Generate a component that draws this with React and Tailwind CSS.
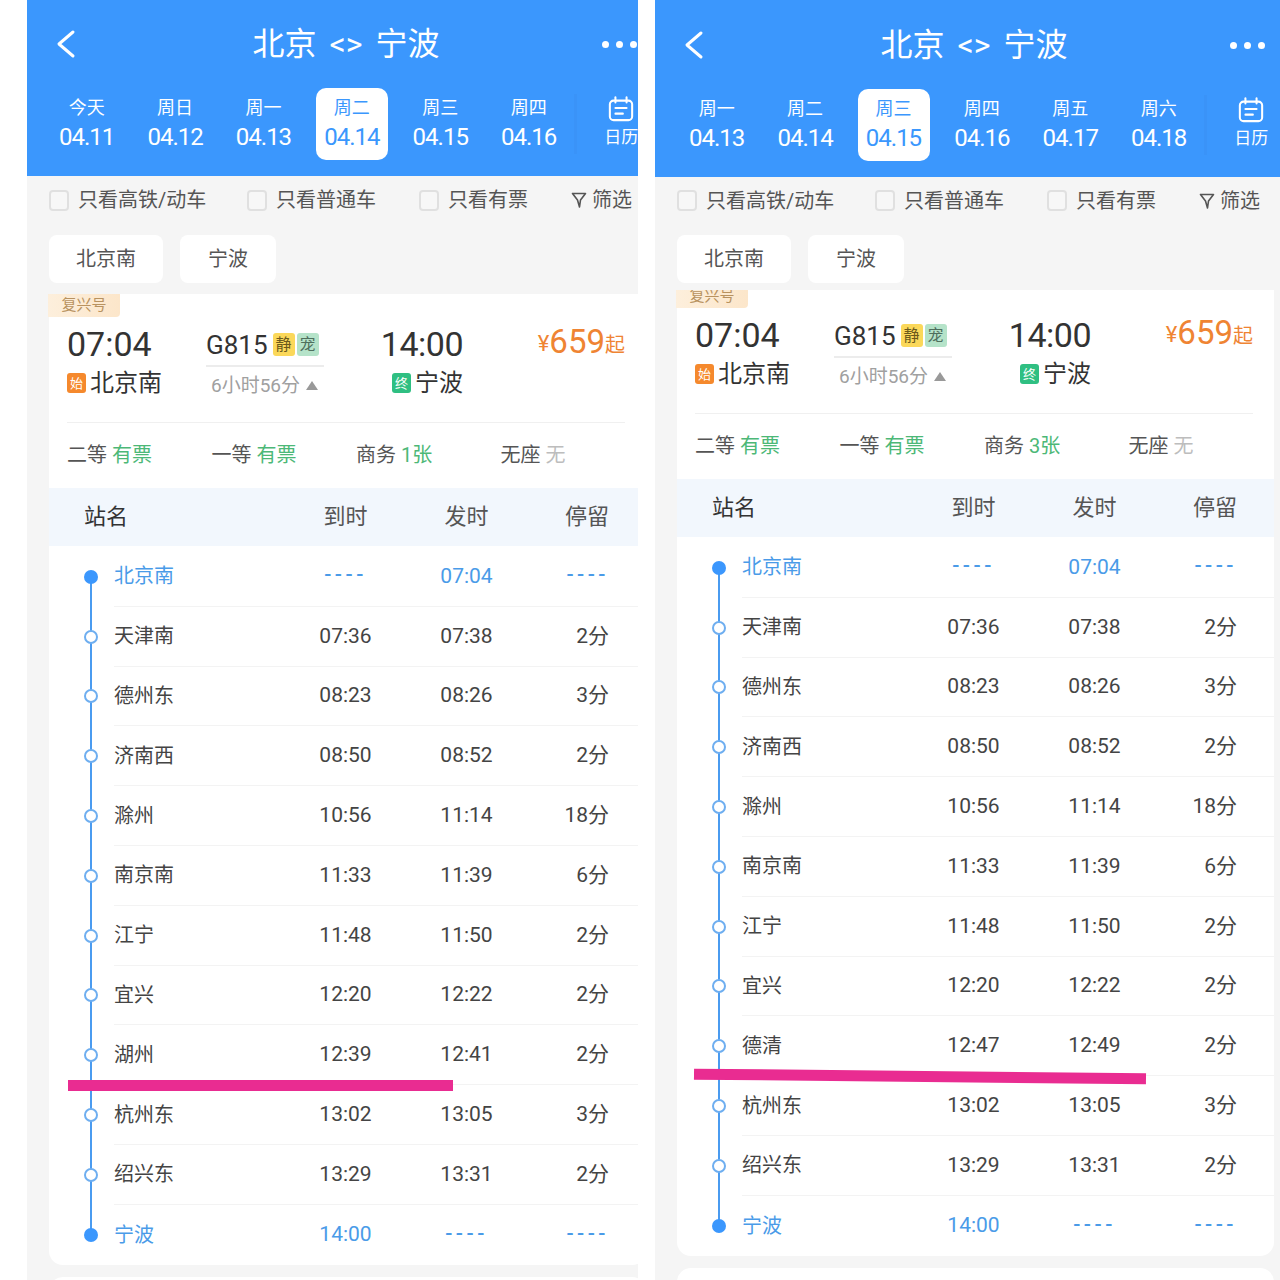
import React from 'react';

const fontStack = { fontFamily: 'Roboto, "Noto Sans CJK SC", sans-serif' };

const leftStops = [
  ['北京南', '----', '07:04', '----'],
  ['天津南', '07:36', '07:38', '2分'],
  ['德州东', '08:23', '08:26', '3分'],
  ['济南西', '08:50', '08:52', '2分'],
  ['滁州', '10:56', '11:14', '18分'],
  ['南京南', '11:33', '11:39', '6分'],
  ['江宁', '11:48', '11:50', '2分'],
  ['宜兴', '12:20', '12:22', '2分'],
  ['湖州', '12:39', '12:41', '2分'],
  ['杭州东', '13:02', '13:05', '3分'],
  ['绍兴东', '13:29', '13:31', '2分'],
  ['宁波', '14:00', '----', '----'],
];

const rightStops = leftStops.map(stop => (stop[0] === '湖州' ? ['德清', '12:47', '12:49', '2分'] : stop));

const leftDays = [['今天', '04.11'], ['周日', '04.12'], ['周一', '04.13'], ['周二', '04.14'], ['周三', '04.15'], ['周四', '04.16']];
const rightDays = [['周一', '04.13'], ['周二', '04.14'], ['周三', '04.15'], ['周四', '04.16'], ['周五', '04.17'], ['周六', '04.18']];

function Header({ days, activeIndex, heightClass, tabsClass }) {
  return (
    <div className={`bg-[#3b97fd] text-white ${heightClass}`}>
      {/* Title bar */}
      <div className="flex items-center h-[88px] pl-[29px]">
        <svg width="20" height="30" viewBox="0 0 20 30" fill="none" className="shrink-0">
          <polyline points="17,3 3,15 17,27" stroke="white" strokeWidth="3" strokeLinecap="round" strokeLinejoin="round" />
        </svg>
        <div className="w-[538px] text-center text-[32px] leading-none whitespace-pre pl-[2px] [word-spacing:5px]">北京 {'<>'} 宁波</div>
        <div className="flex gap-[7px] ml-[-12px]">
          <span className="w-[7px] h-[7px] rounded-full bg-white"></span>
          <span className="w-[7px] h-[7px] rounded-full bg-white"></span>
          <span className="w-[7px] h-[7px] rounded-full bg-white"></span>
        </div>
      </div>

      {/* Date tabs */}
      <div className={`flex items-center ${tabsClass}`}>
        {days.map((day, index) => (
          <div key={day[1]} className="w-[88.4px] flex justify-center">
            <div
              className={`w-[72px] h-[72px] rounded-[10px] flex flex-col items-center justify-center ${
                index === activeIndex ? 'bg-white text-[#3b97fd]' : ''
              }`}
            >
              <span className="text-[18px] leading-[24px] pt-[1px] pr-[1px]">{day[0]}</span>
              <span className="text-[24px] leading-[34px] tracking-[-1px] pr-[1px]">{day[1]}</span>
            </div>
          </div>
        ))}
        <div className="w-[3px] h-[60px] bg-[#3a93f8] ml-[1px]"></div>
        <div className="flex flex-col items-center ml-[27px] mt-[-4px]">
          <svg width="26" height="26" viewBox="0 0 28 28" fill="none">
            <rect x="2" y="5" width="24" height="21" rx="4" stroke="white" strokeWidth="2.2" />
            <line x1="8" y1="1.5" x2="8" y2="7" stroke="white" strokeWidth="2.2" strokeLinecap="round" />
            <line x1="20" y1="1.5" x2="20" y2="7" stroke="white" strokeWidth="2.2" strokeLinecap="round" />
            <line x1="8" y1="13" x2="20" y2="13" stroke="white" strokeWidth="2.2" strokeLinecap="round" />
            <line x1="8" y1="19" x2="16" y2="19" stroke="white" strokeWidth="2.2" strokeLinecap="round" />
          </svg>
          <span className="text-[17px] leading-[24px] mt-[3px]">日历</span>
        </div>
      </div>
    </div>
  );
}

function Check({ label, widthClass }) {
  return (
    <div className={`flex items-center gap-[9px] ${widthClass}`}>
      <span className="w-[20px] h-[21px] rounded-[4px] border-2 border-[#e0e0e0] bg-[#f7f7f7]"></span>
      <span className="text-[20px] leading-none text-[#555]">{label}</span>
    </div>
  );
}

function Filters({ heightClass }) {
  return (
    <div className={`flex items-center pl-[22px] mb-[11px] ${heightClass}`}>
      <Check label="只看高铁/动车" widthClass="w-[198px]" />
      <Check label="只看普通车" widthClass="w-[172px]" />
      <Check label="只看有票" widthClass="w-[152px]" />
      <div className="flex items-center gap-[5px]">
        <svg width="16" height="20" viewBox="0 0 16 20" fill="none">
          <path d="M1.5 3.5 H14.5 L9.5 10 L8.5 17 L6.5 10 Z" stroke="#555" strokeWidth="1.6" strokeLinejoin="round" />
        </svg>
        <span className="text-[20px] leading-none text-[#555]">筛选</span>
      </div>
    </div>
  );
}

function Chips() {
  return (
    <div className="flex gap-[17px] pl-[22px] text-[20px] text-[#555]">
      <div className="w-[114px] h-[48px] rounded-[8px] bg-white flex items-center justify-center">北京南</div>
      <div className="w-[96px] h-[48px] rounded-[8px] bg-white flex items-center justify-center">宁波</div>
    </div>
  );
}

function Seat({ label, value, valueClass }) {
  return (
    <div className="w-[144.5px] text-[20px] leading-none text-[#555]">
      {label} <span className={valueClass}>{value}</span>
    </div>
  );
}

function TrainSummary({ bizCount }) {
  return (
    <>
      <div className="w-[72px] h-[23px] ml-[-1px] rounded-br-[4px] bg-gradient-to-r from-[#fdefdc] to-[#fce6ca] text-[#b8925f] text-[15px] leading-[23px] text-center">
        复兴号
      </div>

      <div className="flex pt-[9px] pl-[18px] text-[#333]">
        <div className="w-[140px]">
          <div className="h-[36px] flex items-center text-[34px] leading-none">07:04</div>
          <div className="h-[36px] mt-[3px] flex items-center gap-[4px] text-[24px] leading-none">
            <span className="w-[19px] h-[20px] rounded-[3px] bg-[#f5892d] text-white text-[13px] flex items-center justify-center">始</span>
            北京南
          </div>
        </div>

        <div className="w-[175px]">
          <div className="w-[118px] h-[41px] pt-[2px] border-b-2 border-[#ececec] flex items-start gap-[5px] ml-[-1px]">
            <span className="text-[26px] leading-[34px]">G815</span>
            <span className="w-[22px] h-[23px] mt-[5px] rounded-[3px] bg-[#fbd85a] text-[#6b5a1c] text-[16px] flex items-center justify-center">静</span>
            <span className="w-[22px] h-[23px] mt-[5px] ml-[-3px] rounded-[3px] bg-[#b5e3c9] text-[#4f6f5d] text-[16px] flex items-center justify-center">宠</span>
          </div>
          <div className="flex items-center gap-[6px] pl-[4px] mt-[9px] text-[19px] leading-none text-[#a0a0a0]">
            6小时56分
            <span className="w-0 h-0 border-x-[6px] border-x-transparent border-b-[9px] border-b-[#999]"></span>
          </div>
        </div>

        <div className="w-[81px] flex flex-col items-end">
          <div className="h-[36px] flex items-center text-[34px] leading-none tracking-[-0.5px]">14:00</div>
          <div className="h-[36px] mt-[3px] flex items-center gap-[4px] text-[24px] leading-none whitespace-nowrap">
            <span className="w-[19px] h-[20px] rounded-[3px] bg-[#2fbf82] text-white text-[13px] flex items-center justify-center">终</span>
            宁波
          </div>
        </div>

        <div className="w-[162px] h-[32px] flex items-end justify-end text-[#ef8433]">
          <span className="text-[22px] leading-[28px]">¥</span>
          <span className="text-[33px] leading-[32px]">659</span>
          <span className="text-[20px] leading-[26px]">起</span>
        </div>
      </div>

      <div className="h-[22px] ml-[18px] mr-[21px] border-b border-[#f0f0f0]"></div>

      <div className="flex items-center h-[65px] pb-[2px] pl-[18px]">
        <Seat label="二等" value="有票" valueClass="text-[#4cb877]" />
        <Seat label="一等" value="有票" valueClass="text-[#4cb877]" />
        <Seat label="商务" value={bizCount} valueClass="text-[#4cb877]" />
        <Seat label="无座" value="无" valueClass="text-[#bdbdbd]" />
      </div>
    </>
  );
}

// dashes in the reference are spaced wider than the plain glyphs
function TimeCell({ value, alignClass }) {
  return <span className={`text-[21px] ${alignClass} ${value === '----' ? 'tracking-[3.5px] pb-[3px] font-medium' : ''}`}>{value}</span>;
}

function StopRow({ stop, index, total }) {
  const isEnd = index === 0 || index === total - 1;
  const textClass = isEnd ? 'text-[#4a9be8]' : 'text-[#444]';

  return (
    <div className="flex h-[59.8px]">
      {/* Timeline dot and line */}
      <div className="w-[65px] relative flex items-center pl-[35px]">
        <div
          className={`absolute left-[41px] w-[2px] bg-[#4a9bf0] ${
            index === 0 ? 'top-1/2 bottom-0' : index === total - 1 ? 'top-0 bottom-1/2' : 'top-0 bottom-0'
          }`}
        ></div>
        <span
          className={`relative w-[14px] h-[14px] rounded-full ${
            isEnd ? 'bg-[#3b97fd]' : 'bg-white border-2 border-[#6eaef0]'
          }`}
        ></span>
      </div>

      <div
        className={`flex-1 grid grid-cols-[171px_121px_121px_82px] items-center ${
          index === total - 1 ? '' : 'border-b border-[#f3f3f3]'
        } ${textClass} text-[20px] leading-none`}
      >
        <span>{stop[0]}</span>
        <TimeCell value={stop[1]} alignClass="text-center" />
        <TimeCell value={stop[2]} alignClass="text-center" />
        <TimeCell value={stop[3]} alignClass="text-right" />
      </div>
    </div>
  );
}

function Phone({ widthClass, days, activeIndex, stops, bizCount, headerClass, tabsClass, filterClass, listClass, innerClass, bar }) {
  return (
    <div className={`relative h-[1280px] overflow-hidden shrink-0 bg-[#f5f5f5] ${widthClass}`}>
      <div className="w-[625px]">
        <Header days={days} activeIndex={activeIndex} heightClass={headerClass} tabsClass={tabsClass} />
        <Filters heightClass={filterClass} />
        <Chips />

        <div className={`overflow-hidden ${listClass}`}>
          <div className={innerClass}>
            <div className="ml-[22px] w-[597px] bg-white rounded-b-[14px]">
              <TrainSummary bizCount={bizCount} />

              <div className="grid grid-cols-[201px_121px_121px_82px] items-center h-[58px] pl-[35px] bg-[#f2f7fd] text-[22px] leading-none text-[#555]">
                <span className="text-[#333]">站名</span>
                <span className="text-center">到时</span>
                <span className="text-center">发时</span>
                <span className="text-right">停留</span>
              </div>

              <div className="pt-[1px]">
                {stops.map((stop, index) => (
                  <StopRow key={stop[0]} stop={stop} index={index} total={stops.length} />
                ))}
              </div>
            </div>

            <div className="ml-[22px] w-[597px] h-[40px] mt-[12px] bg-white rounded-t-[14px]"></div>
          </div>
        </div>
      </div>
      {bar}
    </div>
  );
}

export default function App() {
  return (
    <div className="flex h-[1280px] overflow-hidden bg-white pl-[27px] gap-[17px]" style={fontStack}>
      <Phone
        widthClass="w-[611px]"
        days={leftDays}
        activeIndex={3}
        stops={leftStops}
        bizCount="1张"
        headerClass="h-[176px]"
        tabsClass="pl-[16px]"
        filterClass="h-[48px]"
        listClass="mt-[11px] h-[1000px]"
        innerClass=""
        bar={<div className="absolute left-[41px] top-[1080px] w-[385px] h-[11px] bg-[#e92c91]"></div>}
      />
      <Phone
        widthClass="w-[625px]"
        days={rightDays}
        activeIndex={2}
        stops={rightStops}
        bizCount="3张"
        headerClass="h-[177px] pt-[1px]"
        tabsClass="pl-[18px]"
        filterClass="h-[47px]"
        listClass="mt-[7px] h-[1000px]"
        innerClass="-mt-[5px]"
        bar={<div className="absolute left-[39px] top-[1071px] w-[452px] h-[11px] bg-[#e92c91] rotate-[0.6deg]"></div>}
      />
    </div>
  );
}
